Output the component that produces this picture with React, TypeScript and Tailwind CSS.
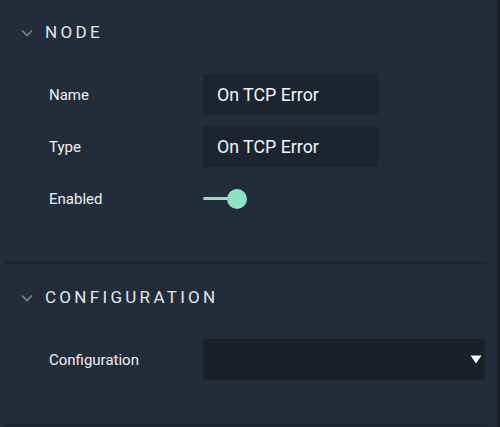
import React from 'react';

function Chevron() {
  return (
    <svg width="12" height="8" viewBox="0 0 12 8" className="shrink-0">
      <path d="M1 1.5l5 5 5-5" fill="none" stroke="#7c8390" strokeWidth="1.6" />
    </svg>
  );
}

function SectionHeader({ title }: { title: string }) {
  return (
    <div className="h-[62px] flex items-center pl-[16px] gap-[12px] pt-[2px]">
      <Chevron />
      <span className="text-[17px] tracking-[3.3px] text-[#e4e7ec]">{title}</span>
    </div>
  );
}

function Row({ label, children }: { label: string; children: React.ReactNode }) {
  return (
    <div className="flex items-center h-[41px] pl-[44px]">
      <div className="w-[154px] shrink-0 text-[15px] text-[#eef0f3] pt-[2px]">{label}</div>
      {children}
    </div>
  );
}

function TextField({ value }: { value: string }) {
  return (
    <div className="w-[175px] h-[41px] bg-[#1d2430] flex items-center px-[14px] pt-[2px] text-[17.8px] text-[#f2f4f7]">
      {value}
    </div>
  );
}

export default function App() {
  return (
    <div
      className="w-[500px] h-[427px] bg-[#232c3b] flex overflow-hidden"
      style={{ fontFamily: 'Roboto, "Liberation Sans", sans-serif' }}
    >
      <div className="flex-1 pl-[5px] pr-[11px] pt-[1px]">
        <section className="border-b-2 border-[#1c232f] pb-[43px]">
          <SectionHeader title="NODE" />
          <div className="pt-[11px] flex flex-col gap-[11px]">
            <Row label="Name">
              <TextField value="On TCP Error" />
            </Row>
            <Row label="Type">
              <TextField value="On TCP Error" />
            </Row>
            <Row label="Enabled">
              <div className="relative w-[45px] h-[20px] flex items-center">
                <div className="h-[3px] w-[30px] rounded-full bg-[#8fe1c0]" />
                <div className="absolute left-[24px] top-0 w-[20px] h-[20px] rounded-full bg-[#8fe1c0]" />
              </div>
            </Row>
          </div>
        </section>
        <section className="border-b-2 border-[#1c232f] pb-[44px] mt-[2px]">
          <SectionHeader title="CONFIGURATION" />
          <div className="pt-[11px] flex flex-col">
            <Row label="Configuration">
              <div className="flex-1 mr-[1px] h-[41px] bg-[#1b2029] rounded-[2px] flex items-center justify-end pr-[3px]">
                <svg width="12" height="9" viewBox="0 0 12 9">
                  <path d="M0.5 0.5h11L6 8.5z" fill="#f4f5f7" />
                </svg>
              </div>
            </Row>
          </div>
        </section>
      </div>
      <div className="w-[3px] bg-[#1a1f28]" />
    </div>
  );
}
